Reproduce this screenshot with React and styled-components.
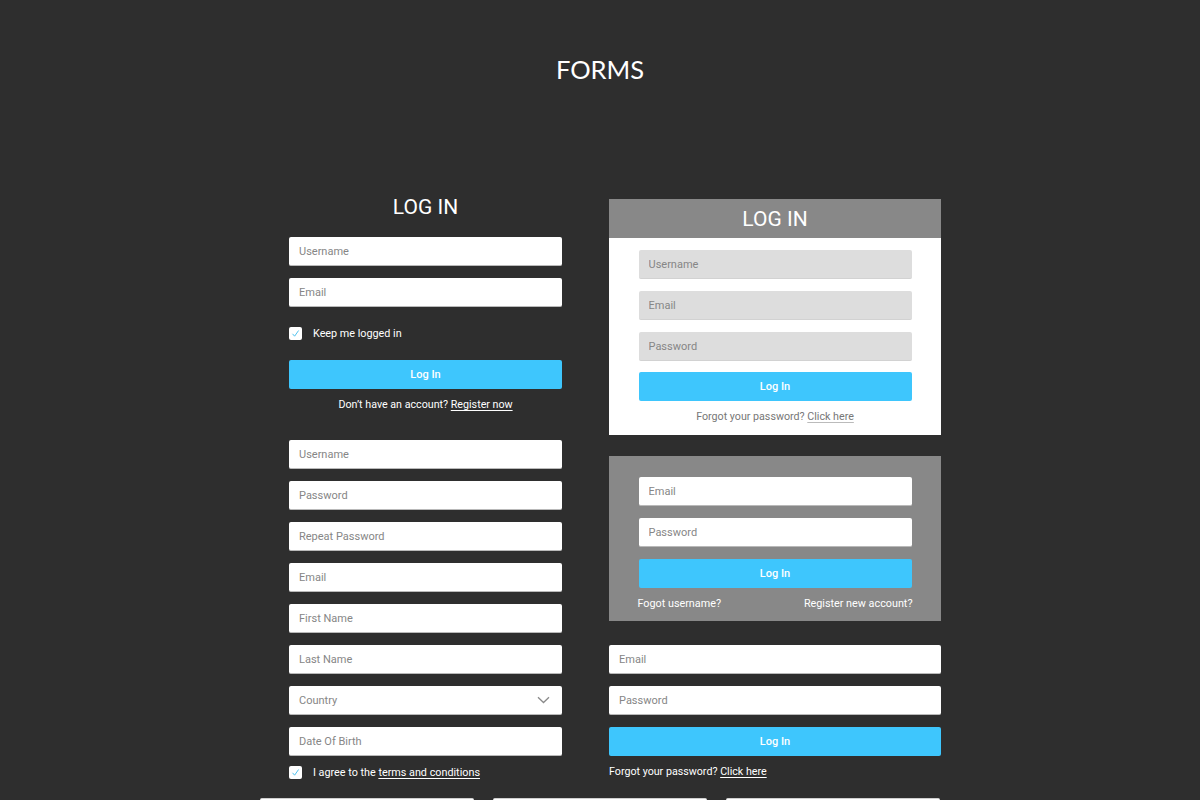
import React from "react";
import styled, { createGlobalStyle } from "styled-components";

const Global = createGlobalStyle`
  html, body { margin: 0; padding: 0; background: #2e2e2e; }
  body { font-family: Roboto, "Liberation Sans", sans-serif; -webkit-font-smoothing: antialiased; }
  * { box-sizing: border-box; }
`;

const Page = styled.div`
  width: 1200px;
  height: 800px;
  overflow: hidden;
  background: #2e2e2e;
`;

const Title = styled.h1`
  margin: 0;
  padding-top: 55px;
  height: 199px;
  font-family: Lato, "Open Sans", sans-serif;
  font-weight: 400;
  font-size: 25.5px;
  line-height: 29px;
  color: #ffffff;
  text-align: center;
`;

const Wrapper = styled.div`
  width: 681px;
  margin: 0 0 0 260px;
`;

const Columns = styled.div`
  display: grid;
  grid-template-columns: 273px 332px;
  column-gap: 47px;
  padding-left: 29px;
  align-items: start;
`;

const Column = styled.div`
  display: flex;
  flex-direction: column;
`;

const Heading = styled.h2`
  margin: 0 0 22px;
  font-weight: 400;
  font-size: 21px;
  line-height: 16px;
  color: #ffffff;
  text-align: center;
`;

const Stack = styled.div`
  display: flex;
  flex-direction: column;
  gap: 12px;
  margin-top: ${(p) => p.$top || 0}px;
`;

const Field = styled.input`
  display: block;
  width: 100%;
  height: 29px;
  margin: 0;
  padding: 0 10px;
  border: none;
  border-bottom: 1px solid ${(p) => (p.$filled ? "#d2d2d2" : "#b9b9b9")};
  border-radius: 2px;
  background: ${(p) => (p.$filled ? "#dddddd" : "#ffffff")};
  font-family: Roboto, "Liberation Sans", sans-serif;
  font-size: 11px;
  color: #555;
  outline: none;
  &::placeholder { color: #868686; }
`;

const SelectBox = styled.div`
  display: flex;
  align-items: center;
  justify-content: space-between;
  height: 29px;
  padding: 0 12px 0 10px;
  background: #ffffff;
  border-bottom: 1px solid #b9b9b9;
  border-radius: 2px;
  font-size: 11px;
  color: #868686;
`;

const Button = styled.button`
  display: block;
  width: 100%;
  height: 29px;
  margin: ${(p) => p.$top || 0}px 0 0;
  border: none;
  border-radius: 2px;
  background: #3ec6fd;
  color: #ffffff;
  font-family: Roboto, "Liberation Sans", sans-serif;
  font-size: 11px;
  font-weight: 500;
  cursor: pointer;
`;

const CheckRow = styled.label`
  display: flex;
  align-items: center;
  gap: 11px;
  height: 13px;
  margin-top: ${(p) => p.$top}px;
  font-size: 10.8px;
  color: #ffffff;
`;

const Box = styled.span`
  display: flex;
  align-items: center;
  justify-content: center;
  width: 13px;
  height: 13px;
  border-radius: 2px;
  background: #ffffff;
`;

const Note = styled.p`
  margin: ${(p) => p.$top}px 0 0;
  font-size: 10.7px;
  line-height: 14px;
  color: ${(p) => p.$color || "#ffffff"};
  text-align: ${(p) => p.$align || "center"};
`;

const Link = styled.a`
  color: inherit;
  text-decoration: underline;
  text-decoration-color: ${(p) => p.$line || "currentColor"};
  text-underline-offset: 2px;
`;

const Card = styled.section`
  background: ${(p) => p.$bg};
  margin-top: ${(p) => p.$top || 0}px;
`;

const CardHead = styled.div`
  height: 39px;
  background: #888888;
  color: #ffffff;
  font-size: 21px;
  line-height: 40px;
  text-align: center;
`;

const CardBody = styled.div`
  width: 273px;
  margin: 0 auto;
  padding: ${(p) => p.$pad};
`;

const Split = styled.div`
  display: flex;
  justify-content: space-between;
  margin: 9px -1px 0 -1px;
  font-size: 10.8px;
  line-height: 14px;
  font-weight: 400;
  color: #ffffff;
`;

const BottomRow = styled.div`
  display: grid;
  grid-template-columns: repeat(3, 214px);
  column-gap: 19px;
  margin-top: 19px;
`;

const Stub = styled.div`
  height: 40px;
  background: #ffffff;
  border-top: 1px solid #cfcfcf;
  border-radius: 2px;
`;

const Check = () => (
  <Box>
    <svg width="9" height="9" viewBox="0 0 9 9">
      <polyline points="1.5,4.8 3.6,7.2 7.6,1.5" fill="none" stroke="#52c3ef" strokeWidth="1" />
    </svg>
  </Box>
);

const Chevron = () => (
  <svg width="13" height="8" viewBox="0 0 13 8">
    <polyline points="1,1.2 6.5,6.5 12,1.2" fill="none" stroke="#8a8a8a" strokeWidth="1.3" />
  </svg>
);

export default function App() {
  return (
    <Page>
      <Global />
      <Title>FORMS</Title>
      <Wrapper>
        <Columns>
          <Column>
            <Heading>LOG IN</Heading>
            <Stack>
              <Field placeholder="Username" />
              <Field placeholder="Email" />
            </Stack>
            <CheckRow $top={20}>
              <Check />
              Keep me logged in
            </CheckRow>
            <Button $top={20}>Log In</Button>
            <Note $top={9}>
              Don’t have an account? <Link>Register now</Link>
            </Note>
            <Stack $top={28}>
              <Field placeholder="Username" />
              <Field placeholder="Password" />
              <Field placeholder="Repeat Password" />
              <Field placeholder="Email" />
              <Field placeholder="First Name" />
              <Field placeholder="Last Name" />
              <SelectBox>
                Country
                <Chevron />
              </SelectBox>
              <Field placeholder="Date Of Birth" />
            </Stack>
            <CheckRow $top={10}>
              <Check />
              <span>
                I agree to the <Link>terms and conditions</Link>
              </span>
            </CheckRow>
          </Column>

          <Column>
            <Card $bg="#ffffff">
              <CardHead>LOG IN</CardHead>
              <CardBody $pad="12px 0 11px">
                <Stack>
                  <Field $filled placeholder="Username" />
                  <Field $filled placeholder="Email" />
                  <Field $filled placeholder="Password" />
                </Stack>
                <Button $top={11}>Log In</Button>
                <Note $top={9} $color="#777777">
                  Forgot your password? <Link $line="#bbbbbb">Click here</Link>
                </Note>
              </CardBody>
            </Card>

            <Card $bg="#888888" $top={21}>
              <CardBody $pad="21px 0 10px">
                <Stack>
                  <Field placeholder="Email" />
                  <Field placeholder="Password" />
                </Stack>
                <Button $top={12}>Log In</Button>
                <Split>
                  <span>Fogot username?</span>
                  <span>Register new account?</span>
                </Split>
              </CardBody>
            </Card>

            <Card $bg="transparent" $top={24}>
              <Stack>
                <Field placeholder="Email" />
                <Field placeholder="Password" />
              </Stack>
              <Button $top={12}>Log In</Button>
              <Note $top={9} $align="left">
                Forgot your password? <Link>Click here</Link>
              </Note>
            </Card>
          </Column>
        </Columns>
        <BottomRow>
          <Stub />
          <Stub />
          <Stub />
        </BottomRow>
      </Wrapper>
    </Page>
  );
}
